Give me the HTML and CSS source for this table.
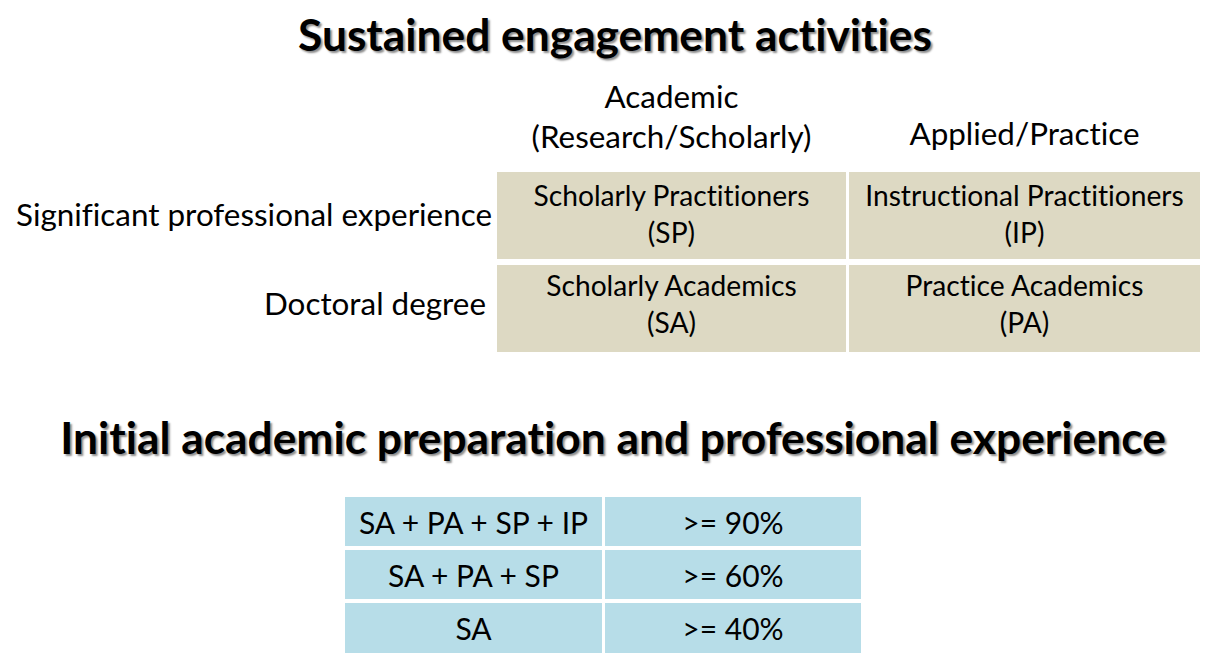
FILE: index.html
```html
<!DOCTYPE html>
<html>
<head>
<meta charset="utf-8">
<link rel="stylesheet" href="styles.css">
</head>
<body>
<div class="page">
  <h1 class="title title-top">Sustained engagement activities</h1>
  <div class="matrix">
    <div class="corner"></div>
    <div class="col-head col-head-1">Academic<br>(Research/Scholarly)</div>
    <div class="col-head col-head-2">Applied/Practice</div>

    <div class="row-head row-head-1">Significant professional experience</div>
    <div class="cell cell-r1">Scholarly Practitioners<br>(SP)</div>
    <div class="cell cell-r1">Instructional Practitioners<br>(IP)</div>

    <div class="row-head row-head-2">Doctoral degree</div>
    <div class="cell cell-r2">Scholarly Academics<br>(SA)</div>
    <div class="cell cell-r2">Practice Academics<br>(PA)</div>
  </div>

  <h1 class="title title-bottom">Initial academic preparation and professional experience</h1>
  <div class="ratios">
    <div class="rcell">SA + PA + SP + IP</div>
    <div class="rcell">&gt;= 90%</div>
    <div class="rcell">SA + PA + SP</div>
    <div class="rcell">&gt;= 60%</div>
    <div class="rcell">SA</div>
    <div class="rcell">&gt;= 40%</div>
  </div>
</div>
</body>
</html>
```

FILE: styles.css
```css
html, body {
  margin: 0;
  padding: 0;
  background: #ffffff;
}

.page {
  width: 1212px;
  height: 663px;
  overflow: hidden;
  font-family: Lato, "Open Sans", "Liberation Sans", sans-serif;
  font-variant-ligatures: none;
  color: #000000;
}

.title {
  margin: 0;
  font-weight: 700;
  font-size: 44.3px;
  line-height: 45px;
  text-align: center;
  color: #000000;
  text-shadow: 2px 2px 2px rgba(0, 0, 0, 0.45);
}

.title-top {
  padding-top: 11px;
  padding-left: 18px;
}

.title-bottom {
  margin-top: 62px;
  padding-left: 14px;
}

.matrix {
  display: grid;
  grid-template-columns: 494px 349px 351px;
  grid-template-rows: 110px 87px 87px;
  column-gap: 3px;
  row-gap: 6px;
  font-size: 31.4px;
  line-height: 40px;
}

.col-head {
  display: flex;
  flex-direction: column;
  justify-content: flex-end;
  align-items: center;
  text-align: center;
  white-space: nowrap;
}

.col-head-1 {
  padding-bottom: 10px;
}

.col-head-2 {
  padding-bottom: 13px;
}

.row-head {
  display: flex;
  align-items: center;
  justify-content: flex-end;
  white-space: nowrap;
}

.row-head-1 {
  padding-right: 2px;
  padding-bottom: 4px;
}

.row-head-2 {
  padding-right: 8px;
  padding-bottom: 12px;
}

.cell {
  background: #ddd9c3;
  display: flex;
  align-items: flex-start;
  justify-content: center;
  text-align: center;
  white-space: nowrap;
  font-size: 28.2px;
  line-height: 37px;
}

.cell-r1 {
  padding-top: 5px;
}

.cell-r2 {
  padding-top: 2px;
}

.ratios {
  display: grid;
  grid-template-columns: 257px 256px;
  grid-template-rows: 49px 49px 50px;
  column-gap: 3px;
  row-gap: 4px;
  margin-top: 38px;
  margin-left: 345px;
  width: 516px;
  font-size: 30px;
}

.rcell {
  background: #b7dde8;
  display: flex;
  align-items: center;
  justify-content: center;
  white-space: nowrap;
}
```
